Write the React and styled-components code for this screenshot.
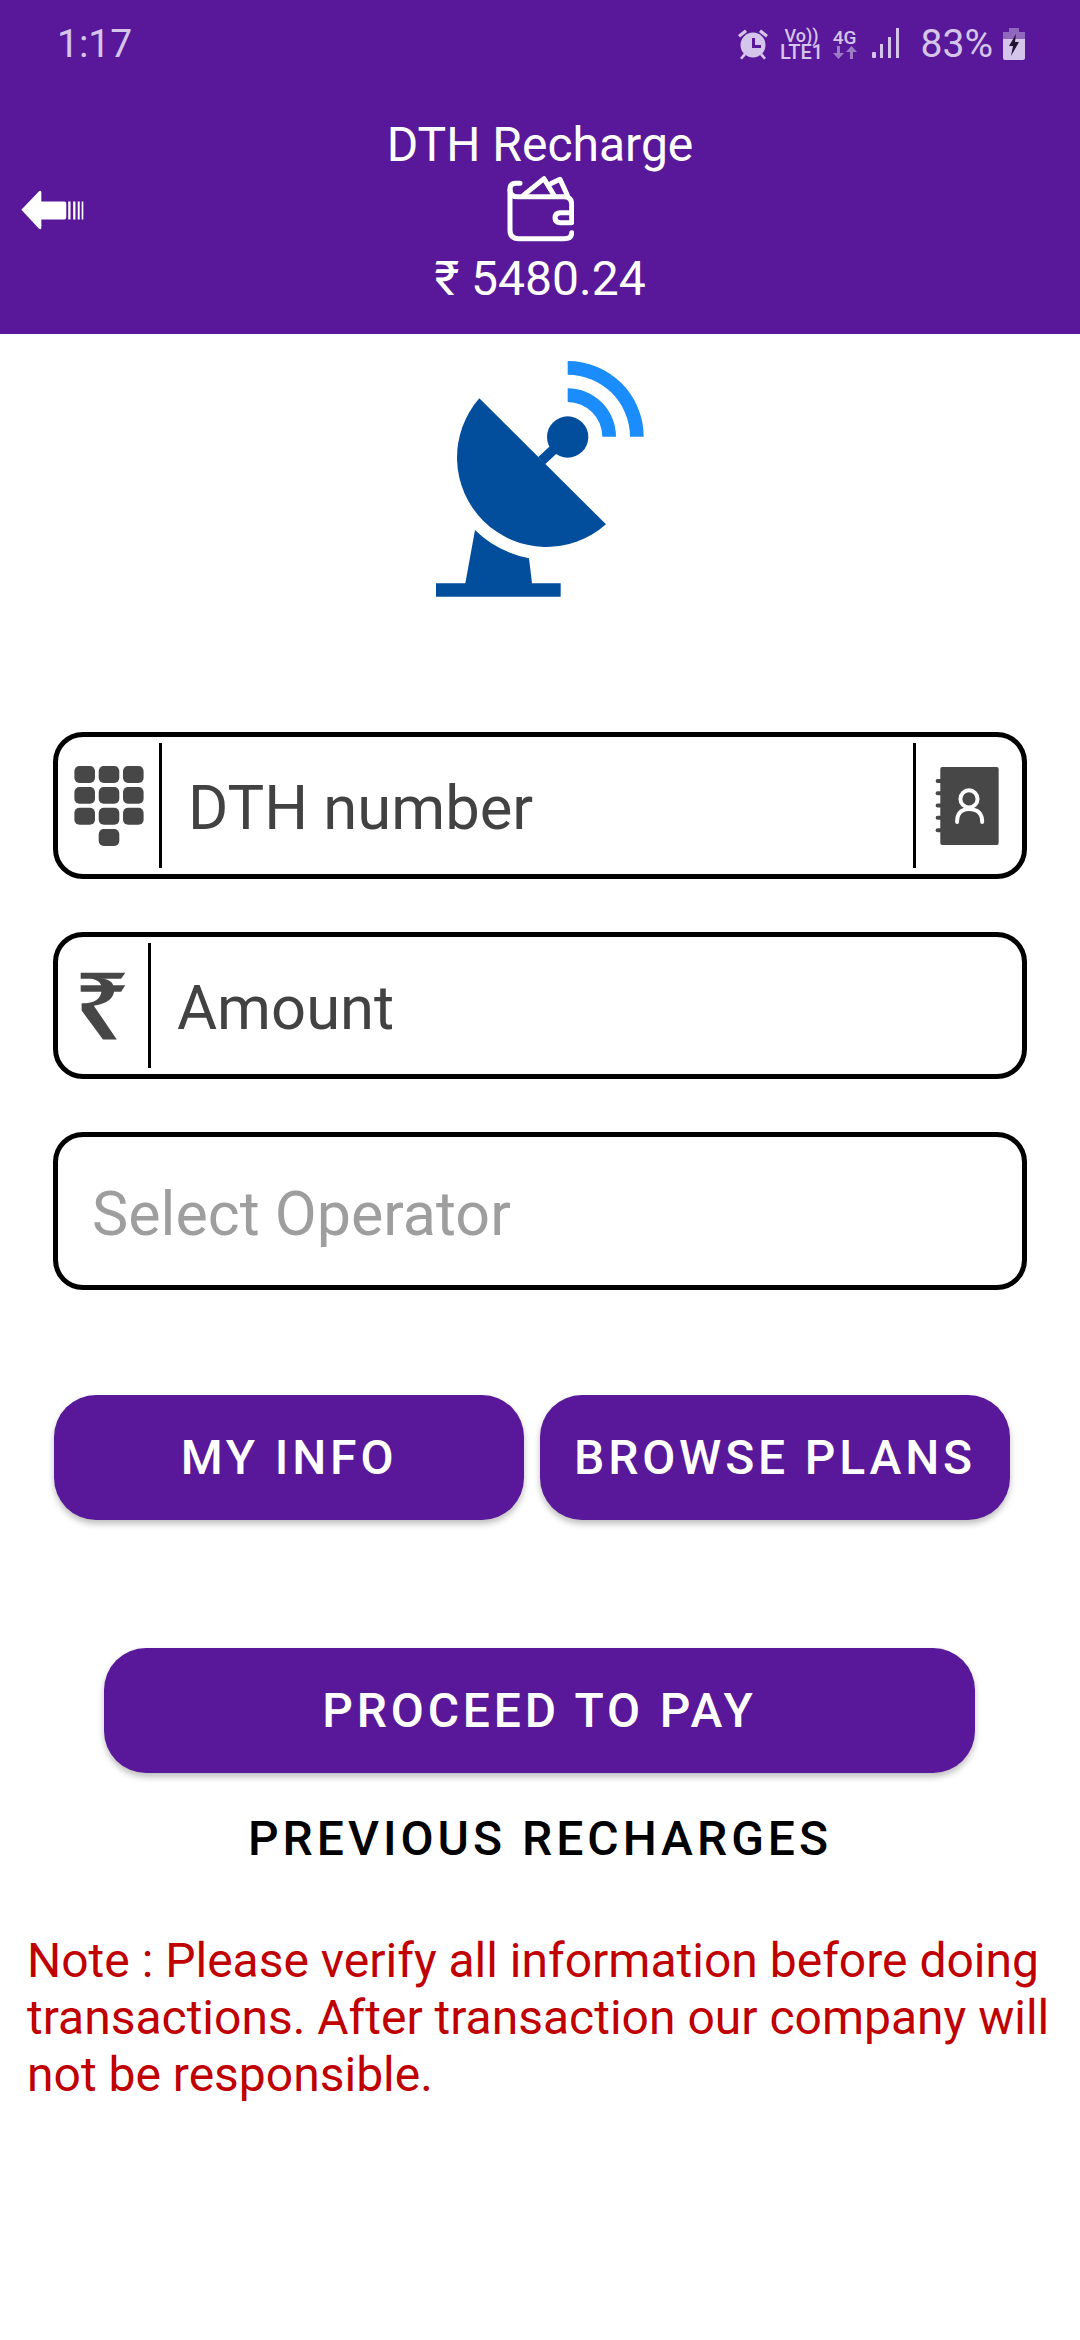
import React from 'react';
import styled, { createGlobalStyle } from 'styled-components';

const GlobalStyle = createGlobalStyle`
  html, body {
    margin: 0;
    padding: 0;
    background: #fff;
  }
  * {
    box-sizing: border-box;
  }
`;

const Page = styled.div`
  width: 1080px;
  height: 2340px;
  background: #fff;
  font-family: Roboto, "Noto Sans", sans-serif;
  overflow: hidden;
`;

const Header = styled.header`
  height: 334px;
  background: #581899;
  color: #fff;
  position: relative;
`;

const StatusBar = styled.div`
  height: 87px;
  padding: 0 55px 0 57px;
  display: flex;
  align-items: center;
  justify-content: space-between;
  color: #d6c5ea;
  font-size: 39px;
`;

const StatusIcons = styled.div`
  display: flex;
  align-items: center;
`;

const Volte = styled.div`
  width: 40px;
  margin-left: 13px;
  display: flex;
  flex-direction: column;
  align-items: center;
  font-size: 18px;
  font-weight: 500;
  line-height: 16px;
  white-space: nowrap;
`;

const LteLine = styled.span`
  font-size: 20px;
`;

const Network = styled.div`
  width: 24px;
  margin-left: 11px;
  display: flex;
  flex-direction: column;
  align-items: center;
  font-size: 19px;
  font-weight: 500;
  line-height: 17px;
`;

const Percent = styled.span`
  margin: 0 10px 0 21px;
`;

const HeaderBody = styled.div`
  display: flex;
  flex-direction: column;
  align-items: center;
`;

const Title = styled.div`
  font-size: 48px;
  line-height: 54px;
  margin-top: 31px;
  margin-bottom: 3px;
`;

const Balance = styled.div`
  font-size: 48px;
  line-height: 54px;
  margin-top: 10px;
`;

const BackButton = styled.div`
  position: absolute;
  left: 20px;
  top: 190px;
  display: flex;
`;

const DishWrap = styled.div`
  display: flex;
  justify-content: center;
  padding: 6px 0 0 0;
  height: 398px;
`;

const Form = styled.div`
  padding: 0 53px;
  display: flex;
  flex-direction: column;
  gap: 53px;
`;

const Field = styled.div`
  height: ${p => p.$h || 147}px;
  border: 5px solid #000;
  border-radius: 30px;
  padding: 6px 0;
  display: flex;
  align-items: stretch;
  background: #fff;
`;

const FieldIcon = styled.div`
  width: ${p => p.$w}px;
  flex: none;
  display: flex;
  align-items: center;
  justify-content: center;
  padding-right: ${p => p.$shift || 0}px;
`;

const Divider = styled.div`
  width: 3px;
  flex: none;
  background: #000;
`;

const FieldText = styled.div`
  flex: 1;
  display: flex;
  align-items: center;
  padding-left: ${p => p.$pad}px;
  padding-top: 5px;
  font-size: ${p => p.$muted ? 61 : 61.5}px;
  color: ${p => p.$muted ? '#9e9e9e' : '#424242'};
`;

const ButtonRow = styled.div`
  display: flex;
  gap: 16px;
  padding: 0 70px 0 54px;
  margin-top: 105px;
`;

const PillButton = styled.div`
  flex: 1;
  height: 125px;
  border-radius: 42px;
  background: #581899;
  color: #fff;
  font-size: 48px;
  font-weight: 500;
  letter-spacing: 3.84px;
  display: flex;
  align-items: center;
  justify-content: center;
  box-shadow: 0 4px 6px rgba(0, 0, 0, 0.25);
`;

const ProceedRow = styled.div`
  padding: 0 105px 0 104px;
  margin-top: 128px;
`;

const Previous = styled.div`
  margin-top: 36px;
  text-align: center;
  font-size: 48px;
  font-weight: 500;
  letter-spacing: 4px;
  line-height: 60px;
  color: #000;
`;

const Note = styled.p`
  margin: 63px 0 0;
  padding: 0 20px 0 27px;
  font-size: 48px;
  line-height: 57px;
  color: #c00000;
`;

const WalletIcon = () => (
  <svg width="68" height="67" viewBox="78 47 204 201" fill="none" stroke="#fff" strokeWidth="15" strokeLinecap="round" strokeLinejoin="round">
    <path d="M275 220 Q275 238 252 238 H115 Q90 238 90 212 V90 Q90 72 108 72 H120" />
    <path d="M90 92 Q90 112 112 112 H252 Q275 112 275 135 V160 H240 Q225 162 225 175 Q225 188 240 190 H275 V160" />
    <path d="M130 108 L192 58 L222 108" />
    <path d="M215 72 L240 60 L262 108" />
  </svg>
);

const BackIcon = () => (
  <svg width="64" height="40" viewBox="60 60 195 122" fill="#fff">
    <path d="M64 120 L118 64 Q125 60 125 68 V95 H195 Q201 95 201 101 V144 Q201 150 195 150 H125 V174 Q125 182 118 178 Z" />
    <rect x="207" y="95" width="7" height="55" />
    <rect x="222" y="95" width="7" height="55" />
    <rect x="236" y="95" width="6" height="55" />
    <rect x="248" y="95" width="5" height="55" />
  </svg>
);

const AlarmIcon = () => (
  <svg width="32" height="32" viewBox="0 0 32 32" fill="#d6c5ea">
    <circle cx="16" cy="17" r="12.5" />
    <path d="M15 10 h3 v7 h6 v3 h-9 Z" fill="#581899" />
    <path d="M1 7 L8 1.5 L10 4 L3 9.5 Z M31 7 L24 1.5 L22 4 L29 9.5 Z M3 30 L7 25 L9 27 L5 31.5 Z M29 30 L25 25 L23 27 L27 31.5 Z" />
  </svg>
);

const ArrowsIcon = () => (
  <svg width="24" height="13" viewBox="0 0 24 13" fill="#9d7cc6">
    <path d="M4 0 h3 v7 h4 l-5.5 6 L0 7 h4 Z" />
    <path d="M17 13 h3 v-7 h4 L18.5 0 L13 6 h4 Z" />
  </svg>
);

const SignalIcon = () => (
  <svg width="28" height="31" viewBox="0 0 28 31" fill="#d6c5ea" style={{ marginLeft: 15 }}>
    <rect x="0" y="24" width="4" height="6" rx="1" />
    <rect x="8" y="16" width="3" height="14" />
    <rect x="16" y="9" width="3" height="21" />
    <rect x="24" y="0" width="3" height="30" />
  </svg>
);

const BatteryIcon = () => (
  <svg width="22" height="32" viewBox="0 0 22 32">
    <path d="M6 0 h10 v4 h6 v8 H0 V4 h6 Z" fill="#8f68bd" />
    <path d="M0 11 H22 V30 Q22 32 20 32 H2 Q0 32 0 30 Z" fill="#d6c5ea" />
    <path d="M13 6 L6 18 H10 L8 28 L16 14 H12 Z" fill="#21122f" />
  </svg>
);

const DishIcon = () => (
  <svg width="280" height="280" viewBox="0 0 840 840">
    <path d="M238 175 L618 553 A268.5 268.5 0 0 1 238 175 Z" fill="#024d9c" />
    <path d="M425 362 L500 292" stroke="#024d9c" strokeWidth="30" fill="none" />
    <circle cx="503" cy="291" r="62" fill="#024d9c" />
    <path d="M225 570 Q290 635 387 655 L396 730 H482 V770 H108 V730 H196 Z" fill="#024d9c" />
    <path d="M503 63 A227 227 0 0 1 731 290 H690 A187 187 0 0 0 503 104 Z" fill="#1a8cfb" />
    <path d="M503 145 A145 145 0 0 1 648 290 H607 A104 104 0 0 0 503 186 Z" fill="#1a8cfb" />
  </svg>
);

const KeypadIcon = () => (
  <svg width="70" height="80" viewBox="103 138 205 237" fill="#474747">
    {[138, 200, 262].map(y => [103, 175, 247].map(x => (
      <rect key={`${x}-${y}`} x={x} y={y} width="61" height="50" rx="15" />
    )))}
    <rect x="175" y="325" width="61" height="50" rx="15" />
  </svg>
);

const RupeeIcon = () => (
  <svg width="46" height="70" viewBox="120 755 140 206" fill="#474747">
    <path d="M122 757 H258 L245 775 H122 Z" />
    <path d="M122 795 H258 L245 815 H122 Z" />
    <path d="M165 772 Q224 772 224 808 Q224 848 162 857 L232 960 H190 L125 872 V850 Q186 850 186 806 Q186 778 150 775 Z" />
  </svg>
);

const ContactIcon = () => (
  <svg width="64" height="80" viewBox="222 138 194 237">
    <rect x="238" y="138" width="177" height="237" rx="6" fill="#474747" />
    {[181, 218, 255, 292, 330].map(y => (
      <rect key={y} x="224" y={y - 6} width="20" height="12" rx="6" fill="#474747" />
    ))}
    <circle cx="325" cy="235" r="26" fill="none" stroke="#fff" strokeWidth="12" />
    <path d="M289 305 Q289 266 325 266 Q365 266 365 305" fill="none" stroke="#fff" strokeWidth="12" strokeLinecap="round" />
  </svg>
);

const App = () => (
  <Page>
    <GlobalStyle />
    <Header>
      <StatusBar>
        <span>1:17</span>
        <StatusIcons>
          <AlarmIcon />
          <Volte>
            <span>Vo))</span>
            <LteLine>LTE1</LteLine>
          </Volte>
          <Network>
            4G
            <ArrowsIcon />
          </Network>
          <SignalIcon />
          <Percent>83%</Percent>
          <BatteryIcon />
        </StatusIcons>
      </StatusBar>
      <BackButton><BackIcon /></BackButton>
      <HeaderBody>
        <Title>DTH Recharge</Title>
        <WalletIcon />
        <Balance>₹ 5480.24</Balance>
      </HeaderBody>
    </Header>

    <DishWrap><DishIcon /></DishWrap>

    <Form>
      <Field>
        <FieldIcon $w={101}><KeypadIcon /></FieldIcon>
        <Divider />
        <FieldText $pad={26}>DTH number</FieldText>
        <Divider />
        <FieldIcon $w={106} $shift={4}><ContactIcon /></FieldIcon>
      </Field>
      <Field>
        <FieldIcon $w={90}><RupeeIcon /></FieldIcon>
        <Divider />
        <FieldText $pad={26}>Amount</FieldText>
      </Field>
      <Field $h={158}>
        <FieldText $pad={34} $muted>Select Operator</FieldText>
      </Field>
    </Form>

    <ButtonRow>
      <PillButton>MY INFO</PillButton>
      <PillButton>BROWSE PLANS</PillButton>
    </ButtonRow>

    <ProceedRow>
      <PillButton>PROCEED TO PAY</PillButton>
    </ProceedRow>

    <Previous>PREVIOUS RECHARGES</Previous>

    <Note>
      Note : Please verify all information before doing transactions. After transaction our company will not be responsible.
    </Note>
  </Page>
);

export default App;
